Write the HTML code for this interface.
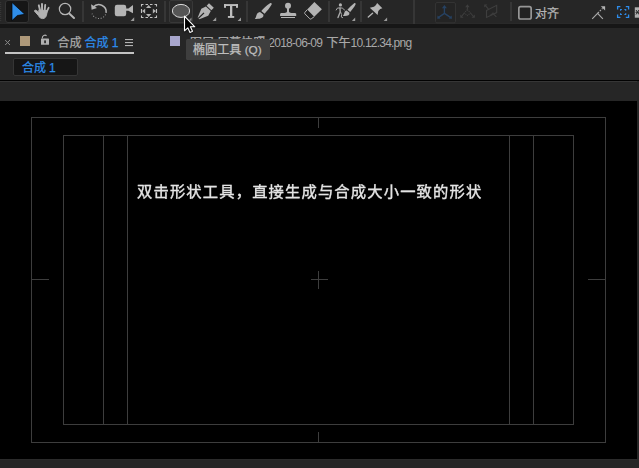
<!DOCTYPE html>
<html lang="zh-CN">
<head>
<meta charset="utf-8">
<title>合成 1</title>
<style>
html,body{margin:0;padding:0;background:#262626;}
body{width:639px;height:468px;position:relative;overflow:hidden;font-family:"Liberation Sans","Noto Sans CJK SC",sans-serif;}
.abs{position:absolute;}
#toolbar{left:0;top:0;width:639px;height:24px;background:#262626;}
#band{left:0;top:23px;width:639px;height:6px;background:#161616;border-top:1px solid #292929;border-bottom:1px solid #292929;box-sizing:border-box;}
#panel{left:0;top:28px;width:639px;height:52px;background:#262626;}
#sep80{left:0;top:80px;width:639px;height:1px;background:#020202;}
#strip{left:0;top:81px;width:639px;height:20px;background:#262626;border-top:1px solid #363636;box-sizing:border-box;}
#viewer{left:0;top:101px;width:637px;height:358px;background:#000;}
#rightcol{left:637px;top:81px;width:2px;height:387px;background:#262626;}
#bottom{left:0;top:459px;width:639px;height:9px;background:#262626;border-top:1px solid #2b2b2b;box-sizing:border-box;}
.t12{font-size:12px;line-height:16px;white-space:nowrap;-webkit-text-stroke:0.25px currentColor;}
#tab1a{left:57.5px;top:35px;color:#a9a9a9;}
#tab1b{left:84.6px;top:35px;color:#2d8ceb;word-spacing:-0.3px;}
#tab2{left:190px;top:35px;color:#a9a9a9;}
#tab2 .lat{-webkit-text-stroke:0;letter-spacing:-0.75px;margin-right:1.8px;margin-left:-0.4px;}
#tab2 .lat2{-webkit-text-stroke:0;letter-spacing:-0.78px;}
#uline{left:5px;top:52px;width:129px;height:2px;background:#c4c4c4;}
#sq1{left:20px;top:36px;width:10px;height:10px;background:#ae997a;}
#sq2{left:170px;top:36px;width:10px;height:10px;background:#a8a6cc;}
#btn{left:13px;top:58px;width:63px;height:16px;background:#161616;border:1px solid #353535;border-radius:2px;box-sizing:content-box;}
#btntxt{left:22px;top:59.5px;color:#2d8ceb;word-spacing:-0.3px;}
#tip{left:186px;top:39px;width:84px;height:21px;background:#3e3e3e;border-radius:1.5px;}
#tiptxt{left:193px;top:41.5px;color:#bebebe;-webkit-text-stroke:0.25px currentColor;font-size:12.1px;line-height:16px;white-space:nowrap;}
#tiptxt span{font-size:11.8px;}
#snaptxt{left:535px;top:5.5px;color:#b4b4b4;}
#maintext{left:137px;top:178.5px;color:#e4e4e4;font-size:15.3px;letter-spacing:1.15px;line-height:22px;white-space:nowrap;font-family:"Noto Sans CJK SC","Liberation Sans",sans-serif;will-change:transform;-webkit-text-stroke:0.3px #e4e4e4;text-shadow:0 0 1px rgba(228,228,228,0.35);}
svg{position:absolute;left:0;top:0;}
</style>
</head>
<body>
<div id="toolbar" class="abs"></div>
<div id="band" class="abs"></div>
<div id="panel" class="abs"></div>
<div id="sep80" class="abs"></div>
<div id="strip" class="abs"></div>
<div id="viewer" class="abs"></div>
<div id="rightcol" class="abs"></div>
<div id="bottom" class="abs"></div>

<!-- tab row -->
<div id="sq1" class="abs"></div>
<div id="tab1a" class="abs t12">合成</div>
<div id="tab1b" class="abs t12">合成 1</div>
<div id="uline" class="abs"></div>
<div id="sq2" class="abs"></div>
<div id="tab2" class="abs t12">图层 屏幕快照 <span class="lat">2018-06-09 </span>下午<span class="lat2">10.12.34.png</span></div>
<div id="btn" class="abs"></div>
<div id="btntxt" class="abs t12">合成 1</div>
<div id="snaptxt" class="abs t12">对齐</div>

<!-- viewer -->
<div id="maintext" class="abs">双击形状工具，直接生成与合成大小一致的形状</div>

<svg id="guides" width="639" height="468" viewBox="0 0 639 468" shape-rendering="crispEdges">
  <g fill="none" stroke="#3d3d3d" stroke-width="1">
    <rect x="31.5" y="117.5" width="574" height="325"/>
    <rect x="63.5" y="135.5" width="510" height="289"/>
    <line x1="103.5" y1="136" x2="103.5" y2="424"/>
    <line x1="127.5" y1="136" x2="127.5" y2="424"/>
    <line x1="509.5" y1="136" x2="509.5" y2="424"/>
    <line x1="533.5" y1="136" x2="533.5" y2="424"/>
    <line x1="318.5" y1="118" x2="318.5" y2="128"/>
    <line x1="318.5" y1="432" x2="318.5" y2="442"/>
    <line x1="32" y1="279.5" x2="49" y2="279.5"/>
    <line x1="588" y1="279.5" x2="605" y2="279.5"/>
    <line x1="311" y1="279.5" x2="328" y2="279.5"/>
    <line x1="318.5" y1="271" x2="318.5" y2="289"/>
  </g>
</svg>

<svg id="icons" width="639" height="80" viewBox="0 0 639 80">
  <!-- gripper -->
  <g fill="#3b3b3b">
    <rect x="0" y="2" width="1.2" height="0.8"/><rect x="0" y="4" width="1.2" height="0.8"/><rect x="0" y="6" width="1.2" height="0.8"/><rect x="0" y="8" width="1.2" height="0.8"/><rect x="0" y="10" width="1.2" height="0.8"/><rect x="0" y="12" width="1.2" height="0.8"/><rect x="0" y="14" width="1.2" height="0.8"/><rect x="0" y="16" width="1.2" height="0.8"/><rect x="0" y="18" width="1.2" height="0.8"/><rect x="0" y="20" width="1.2" height="0.8"/>
  </g>
  <!-- separators -->
  <g fill="#363636">
    <rect x="82" y="1" width="2" height="21"/>
    <rect x="164" y="1" width="2" height="21"/>
    <rect x="246" y="1" width="2" height="21"/>
    <rect x="328" y="1" width="2" height="21"/>
    <rect x="360" y="1" width="2" height="21"/>
    <rect x="413" y="0" width="2" height="24"/>
    <rect x="510" y="2" width="2" height="19"/>
  </g>
  <!-- selection tool (active) -->
  <rect x="5.5" y="0.5" width="23" height="22" rx="2.5" fill="#161616" stroke="#343434"/>
  <path d="M12,2.5 L24.8,14.3 L17.4,15.5 L12,20.6 Z" fill="#2f8eea" stroke="#050505" stroke-width="0.7" stroke-linejoin="miter"/>
  <!-- hand -->
  <g fill="#b2b2b2" stroke="#b2b2b2" stroke-linecap="round" stroke-linejoin="round">
    <path d="M39,10.2 L47,10.5 L46.9,13 C46.6,16.8 45,18.6 42.6,18.6 C40.6,18.6 39.6,17.6 38.6,15.8 L34.4,11 L35.3,10 L39.4,12.4 Z" stroke-width="1"/>
    <line x1="38.8" y1="5.3" x2="40.1" y2="10.5" stroke-width="1.9"/>
    <line x1="42" y1="4" x2="42.1" y2="10.5" stroke-width="2"/>
    <line x1="45.2" y1="5" x2="44.7" y2="10.5" stroke-width="1.9"/>
    <line x1="48.6" y1="7.8" x2="46.3" y2="12.5" stroke-width="1.8"/>
  </g>
  <!-- zoom -->
  <circle cx="65.05" cy="9" r="5.7" fill="none" stroke="#b6b6b6" stroke-width="1.2"/>
  <line x1="69.2" y1="13.6" x2="74" y2="18" stroke="#b6b6b6" stroke-width="2" stroke-linecap="round"/>
  <!-- rotate -->
  <path d="M93.2,7.3 A7.3,7.3 0 0 1 106.1,12.8" fill="none" stroke="#b4b4b4" stroke-width="1.5"/>
  <path d="M91.1,4.2 L91.6,9.7 L97,8.1 Z" fill="#b4b4b4"/>
  <path d="M105.6,14.4 A7.3,7.3 0 0 1 92.1,13.6" fill="none" stroke="#999999" stroke-width="1.1" stroke-dasharray="1 1.7"/>
  <!-- camera -->
  <rect x="114.8" y="4.8" width="11.4" height="11.4" rx="2.2" fill="#b4b4b4"/>
  <path d="M126,8.4 L128.4,8.4 L133,5 L133,13.2 L128.4,10.8 L126,10.8 Z" fill="#b4b4b4"/>
  <path d="M130.6,20.9 L134.2,20.9 L134.2,17.3 Z" fill="#9a9a9a"/>
  <!-- pan behind -->
  <rect x="146" y="8.6" width="5.5" height="4.9" fill="#1e1e1e"/>
  <path d="M141.5,6.5 V4.5 H143.5 M145.5,4.5 H148 M150,4.5 H152.5 M154.5,4.5 H156.5 V6.5 M156.5,9 V13 M156.5,15.5 V17.5 H154.5 M152.5,17.5 H150 M148,17.5 H145.5 M143.5,17.5 H141.5 V15.5 M141.5,13 V9" fill="none" stroke="#c2c2c2" stroke-width="1.1"/>
  <g fill="#b4b4b4">
    <path d="M148.65,4.9 L146,8.1 L151.3,8.1 Z"/>
    <path d="M148.65,17.1 L146,14 L151.3,14 Z"/>
    <path d="M142.1,11.05 L145.1,8.7 L145.1,13.4 Z"/>
    <path d="M156,11.05 L152.9,8.7 L152.9,13.4 Z"/>
  </g>
  <!-- ellipse tool (hover) -->
  <rect x="169.5" y="0.5" width="23" height="22" rx="1.5" fill="#2a2a2a" stroke="#383838"/>
  <ellipse cx="181" cy="10.9" rx="8.6" ry="6.5" fill="#555555" stroke="#dcdcdc" stroke-width="1"/>
  <path d="M188.4,20.8 L191.5,20.8 L191.5,17.4 Z" fill="#8c8c8c"/>
  <!-- pen -->
  <g fill="#b4b4b4">
    <path d="M209,3.3 L213.8,7.8 L211.4,10.3 L206.6,5.7 Z"/>
    <path d="M205.9,6.4 L210.8,11 L208.2,15.8 L199.3,19.2 L197.7,17.4 L201.3,8.8 Z"/>
    <path d="M212.6,20.9 L216.2,20.9 L216.2,17.3 Z" fill="#9a9a9a"/>
  </g>
  <line x1="198.3" y1="18.4" x2="204" y2="12.9" stroke="#202020" stroke-width="1.3"/>
  <!-- type -->
  <g fill="#bdbdbd">
    <rect x="224" y="4.1" width="14" height="1.9"/>
    <rect x="224" y="4.1" width="2" height="3.7"/>
    <rect x="236" y="4.1" width="2" height="3.7"/>
    <rect x="230" y="5" width="2.3" height="12"/>
    <rect x="227.9" y="16" width="6.3" height="1.9"/>
    <path d="M237.6,20.9 L241,20.9 L241,17.4 Z" fill="#9a9a9a"/>
  </g>
  <!-- brush -->
  <g fill="#b4b4b4">
    <path d="M270,3.2 C271.3,2.4 272.2,3.4 271.5,4.8 C269.8,8 267,11 264.6,13.7 L261.3,11 C263.5,8.5 266.5,5.5 270,3.2 Z"/>
    <path d="M260,12 L263.3,14.5 C264.2,17.8 260.5,19.2 254.8,18.9 C256.8,17.2 255.8,12.6 260,12 Z"/>
  </g>
  <!-- stamp -->
  <g fill="#b4b4b4">
    <circle cx="288" cy="5.7" r="3"/>
    <path d="M287,8 H289 V11.5 C289,12.4 290,12.9 291.5,12.9 H295.2 L296.2,13.8 V16 H280.1 V13.8 L281.1,12.9 H284.5 C286,12.9 287,12.4 287,11.5 Z"/>
    <rect x="281" y="17" width="14" height="1"/>
  </g>
  <!-- eraser -->
  <path d="M307.3,9.6 L304.9,12.4 C304.5,12.9 304.5,13.4 304.9,13.8 L309.9,18.8 C310.3,19.2 310.8,19.2 311.3,18.8 L314.2,16.7" fill="#1f1f1f" stroke="#b4b4b4" stroke-width="1"/>
  <path d="M314.4,2.1 L321.9,9.3 L314.2,16.8 L307.2,9.6 Z" fill="#b4b4b4"/>
  <!-- roto brush -->
  <g fill="#b4b4b4" stroke="none">
    <circle cx="340.4" cy="4.9" r="1.6"/>
    <path d="M354.2,3.2 C355.4,2.6 356,3.6 355.4,4.8 C354,7.5 352,10 350.2,12 L347.4,9.8 C349.5,7.3 351.8,4.9 354.2,3.2 Z"/>
    <path d="M346.6,10.5 L349.4,12.8 C349.9,15.4 347.2,16.4 342.8,15.9 C344.8,14.6 343.6,11 346.6,10.5 Z"/>
    <path d="M351.9,20.9 L355.2,20.9 L355.2,17.5 Z" fill="#9a9a9a"/>
  </g>
  <g fill="none" stroke="#a8a8a8" stroke-width="1" stroke-linecap="round" stroke-linejoin="round">
    <path d="M336.2,10 L337.5,8 L342.2,8 L344.6,10"/>
    <path d="M340,8 L340.2,12 L338,17.6" stroke-width="1.4"/>
    <path d="M340.6,12 L341.6,14.5 L341.3,17 L342.6,17.6"/>
  </g>
  <!-- pin -->
  <g fill="#b4b4b4">
    <path d="M377.1,2.9 L382.4,8.3 L380.2,9 L378.3,11 L377.6,15.1 L369.8,7.7 L374,6.8 L376,4.9 Z"/>
    <path d="M383.7,20.9 L387.1,20.9 L387.1,17.4 Z" fill="#9a9a9a"/>
  </g>
  <line x1="372.6" y1="13.2" x2="368.3" y2="17" stroke="#b4b4b4" stroke-width="1.4" stroke-linecap="round"/>
  <!-- axis modes -->
  <rect x="435.5" y="2.5" width="20" height="20.4" rx="1.5" fill="#242424" stroke="#333333"/>
  <g fill="none" stroke="#264263" stroke-width="1.3">
    <path d="M444.4,13.4 V6.5 M444.4,13.4 L438.3,17.6 M444.4,13.4 L450.8,17.6"/>
  </g>
  <g fill="#264263">
    <path d="M444.4,5 L441.9,8.2 L446.9,8.2 Z"/>
    <path d="M437.2,18.8 L437.6,15.6 L440.6,18.6 Z"/>
    <path d="M452,18.8 L451.6,15.6 L448.6,18.6 Z"/>
  </g>
  <g fill="none" stroke="#3e3e3e" stroke-width="1.1">
    <path d="M467.4,9.5 V6 M464.3,13 L461.5,16.5 M470.5,13 L473.5,16.5"/>
    <path d="M467.4,9.5 L470.5,13 L467.4,15.5 L464.3,13 Z" stroke-dasharray="1.2 0.8"/>
    <path d="M486.5,10.6 L496.7,5.3 V12.6 L486.5,17.5 Z"/>
    <path d="M488.5,9.2 L485.2,5.3 M493,12.4 V13.6 L496.4,16.8 M493,13.6 L490.6,15"/>
  </g>
  <g fill="#3e3e3e">
    <path d="M467.4,4.3 L465.2,7.3 L469.6,7.3 Z"/>
    <path d="M460.3,17.8 H463.6 L460.3,14.4 Z"/>
    <path d="M474.8,17.8 H471.5 L474.8,14.4 Z"/>
    <path d="M484.2,4.4 H487.4 L484.2,7.6 Z"/>
  </g>
  <!-- snapping checkbox -->
  <rect x="518.85" y="6.7" width="12.3" height="12.3" rx="1.8" fill="#212121" stroke="#979797" stroke-width="1.7"/>
  <!-- right icons -->
  <path d="M592.2,18.9 L597.6,13.3 L602.9,18.9" fill="none" stroke="#a8a8a8" stroke-width="1.1"/>
  <path d="M597.8,13.1 L602.6,8.4" fill="none" stroke="#a8a8a8" stroke-width="1.2" stroke-dasharray="1.6 1.2"/>
  <path d="M600.8,6.2 L605.1,6.2 L605.1,10.4 Z" fill="#b4b4b4"/>
  <g fill="none" stroke="#2d8ceb" stroke-width="1.3">
    <path d="M617.6,9.4 V6.6 H620.4 M625.8,6.6 H628.6 V9.4 M628.6,14.6 V17.4 H625.8 M620.4,17.4 H617.6 V14.6"/>
    <path d="M620.6,10.8 V9.5 H621.9 M624.4,9.5 H625.7 V10.8 M625.7,13.2 V14.5 H624.4 M621.9,14.5 H620.6 V13.2" stroke-width="1.2"/>
  </g>
  <rect x="634.8" y="7.3" width="5" height="10.4" fill="#b0b0b0"/>
  <path d="M636,10 L639,14.5 M636,14.5 L639,10 M635.5,12.3 H639" stroke="#2a2a2a" stroke-width="1" fill="none"/>
  <!-- tab close x -->
  <path d="M5.2,40 L10,45 M10,40 L5.2,45" stroke="#8a8a8a" stroke-width="1" fill="none"/>
  <!-- lock -->
  <rect x="41" y="38.5" width="8" height="6.3" rx="0.6" fill="#b0b0b0"/>
  <rect x="44.2" y="40.4" width="1.7" height="2.8" fill="#262626"/>
  <path d="M42.3,38.6 V37.9 A2.7,2.7 0 0 1 46.6,35.7" fill="none" stroke="#b0b0b0" stroke-width="1.1"/>
  <!-- panel menu -->
  <g fill="#b4b4b4">
    <rect x="125" y="39" width="8" height="1.1"/>
    <rect x="125" y="42" width="8" height="1.1"/>
    <rect x="125" y="45" width="8" height="1.1"/>
  </g>
</svg>

<!-- tooltip -->
<div id="tip" class="abs"></div>
<div id="tiptxt" class="abs">椭圆工具<span> (Q)</span></div>

<svg id="cursor" width="639" height="80" viewBox="0 0 639 80" style="filter:drop-shadow(0 1px 1.2px rgba(0,0,0,0.55));">
  <path d="M184.5,16.2 L184.5,30.8 L187.8,27.8 L190,32.4 L192.5,31.3 L190.4,26.8 L194.8,26.8 Z" fill="#000" stroke="#fff" stroke-width="1.1" stroke-linejoin="round"/>
</svg>
</body>
</html>
